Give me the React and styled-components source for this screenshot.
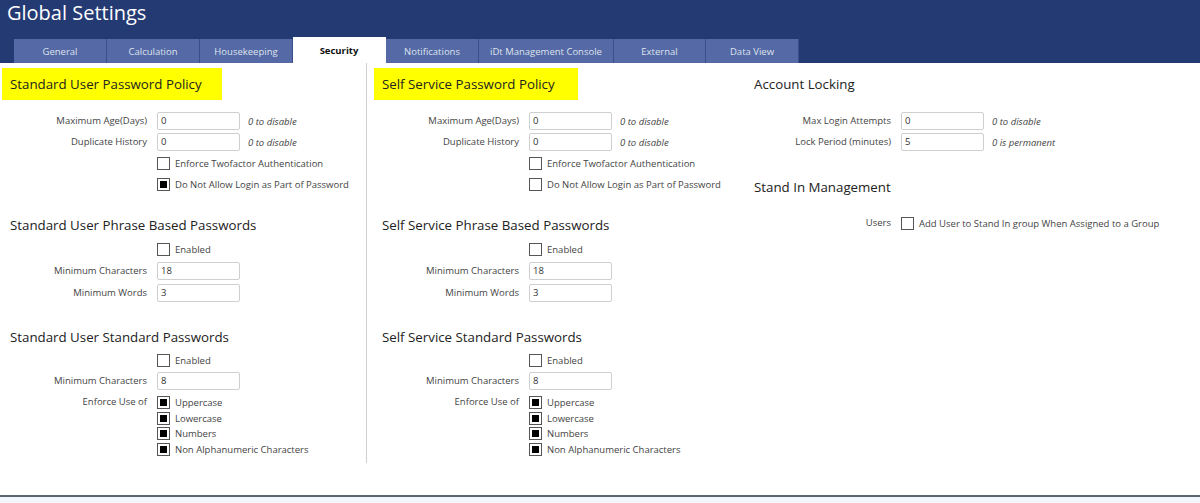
import styled, { createGlobalStyle } from 'styled-components';

const GlobalStyle = createGlobalStyle`
  body {
    margin: 0;
    background: #fff;
    font-family: "Open Sans", "Noto Sans", sans-serif;
    color: #333;
  }
`;

const Page = styled.div`
  height: 503px;
  display: flex;
  flex-direction: column;
  overflow: hidden;
`;

const Header = styled.header`
  height: 63px;
  background: #243a73;
  display: flex;
  flex-direction: column;
  justify-content: space-between;
`;

const Title = styled.h1`
  margin: 0;
  padding: 1px 0 0 7px;
  font-size: 20px;
  font-weight: 400;
  line-height: 24px;
  color: #fff;
`;

const Tabs = styled.nav`
  display: flex;
  align-items: flex-end;
  padding-left: 14px;
`;

const Tab = styled.div`
  width: ${({ $w }) => $w}px;
  height: ${({ $active }) => ($active ? 26 : 24)}px;
  box-sizing: border-box;
  display: flex;
  align-items: center;
  justify-content: center;
  font-size: 9.5px;
  font-weight: ${({ $active }) => ($active ? 700 : 400)};
  color: ${({ $active }) => ($active ? '#111' : '#dfe3ee')};
  background: ${({ $active }) => ($active ? '#fff' : '#5469a5')};
  border-right: 1px solid ${({ $active }) => ($active ? '#fff' : '#3b4e8b')};
`;

const Main = styled.main`
  flex: 1;
  display: grid;
  grid-template-columns: 367px 379px 1fr;
  align-items: start;
`;

const Column = styled.section`
  padding: 5px 0 6px ${({ $pad }) => $pad}px;
  border-right: ${({ $divider }) => ($divider ? '1px solid #d0d0d0' : 'none')};
`;

const Heading = styled.h2`
  margin: ${({ $top }) => $top || 0}px 0 0;
  display: inline-block;
  height: ${({ $tall }) => ($tall ? 32 : 20)}px;
  line-height: ${({ $tall }) => ($tall ? 32 : 20)}px;
  padding: 0 ${({ $right }) => $right || 20}px 0 8px;
  font-size: 13.3px;
  font-weight: 400;
  color: #222;
  background: ${({ $highlight }) => ($highlight ? '#ffff00' : 'transparent')};
`;

const Form = styled.div`
  display: grid;
  grid-template-columns: 145px auto;
  column-gap: 10px;
  row-gap: ${({ $gap }) => $gap || 3}px;
  margin-top: ${({ $top }) => $top}px;
  align-items: start;
`;

const Label = styled.div`
  text-align: right;
  font-size: 9.5px;
  line-height: 18px;
  color: #444;
`;

const Field = styled.div`
  display: flex;
  align-items: center;
  min-height: 18px;
`;

const Input = styled.div`
  width: 83px;
  height: 18px;
  box-sizing: border-box;
  border: 1px solid #cfcfcf;
  border-radius: 2px;
  padding-left: 3px;
  font-size: 9.5px;
  line-height: 16px;
  color: #333;
`;

const Hint = styled.span`
  margin-left: 8px;
  font-size: 9.5px;
  font-style: italic;
  color: #444;
`;

const Check = styled.span`
  width: 13px;
  height: 13px;
  box-sizing: border-box;
  border: 1px solid #555;
  background: ${({ $on }) => ($on ? '#000' : '#fff')};
  box-shadow: ${({ $on }) => ($on ? 'inset 0 0 0 2px #fff' : 'none')};
  flex-shrink: 0;
`;

const CheckText = styled.span`
  margin-left: 5px;
  font-size: 9.5px;
  color: #444;
`;

const Stack = styled.div`
  display: flex;
  flex-direction: column;
`;

const StackItem = styled.div`
  display: flex;
  align-items: center;
  height: 15.3px;
  &:first-child {
    height: 18px;
  }
`;

const Footer = styled.footer`
  height: 6px;
  border-top: 2px solid #5b6670;
  background: #f3f6fa;
`;

const tabs = [
  ['General', 93],
  ['Calculation', 93],
  ['Housekeeping', 93],
  ['Security', 93],
  ['Notifications', 93],
  ['iDt Management Console', 135],
  ['External', 92],
  ['Data View', 93],
];

function InputRow({ label, value, hint }) {
  return (
    <>
      <Label>{label}</Label>
      <Field>
        <Input>{value}</Input>
        {hint && <Hint>{hint}</Hint>}
      </Field>
    </>
  );
}

function CheckRow({ label, text, on }) {
  return (
    <>
      <Label>{label}</Label>
      <Field>
        <Check $on={on} />
        <CheckText>{text}</CheckText>
      </Field>
    </>
  );
}

function PolicyColumn({ prefix, title, loginChecked, pad, divider, right }) {
  return (
    <Column $pad={pad} $divider={divider}>
      <Heading $tall $highlight $right={right}>{title}</Heading>
      <Form $top={12}>
        <InputRow label="Maximum Age(Days)" value="0" hint="0 to disable" />
        <InputRow label="Duplicate History" value="0" hint="0 to disable" />
        <CheckRow text="Enforce Twofactor Authentication" />
        <CheckRow text="Do Not Allow Login as Part of Password" on={loginChecked} />
      </Form>

      <Heading $top={22}>{prefix} Phrase Based Passwords</Heading>
      <Form $top={5} $gap={4}>
        <CheckRow text="Enabled" />
        <InputRow label="Minimum Characters" value="18" />
        <InputRow label="Minimum Words" value="3" />
      </Form>

      <Heading $top={25}>{prefix} Standard Passwords</Heading>
      <Form $top={4}>
        <CheckRow text="Enabled" />
        <InputRow label="Minimum Characters" value="8" />
        <Label>Enforce Use of</Label>
        <Stack>
          {['Uppercase', 'Lowercase', 'Numbers', 'Non Alphanumeric Characters'].map((t) => (
            <StackItem key={t}>
              <Check $on />
              <CheckText>{t}</CheckText>
            </StackItem>
          ))}
        </Stack>
      </Form>
    </Column>
  );
}

export default function App() {
  return (
    <Page>
      <GlobalStyle />
      <Header>
        <Title>Global Settings</Title>
        <Tabs>
          {tabs.map(([name, w]) => (
            <Tab key={name} $w={w} $active={name === 'Security'}>
              {name}
            </Tab>
          ))}
        </Tabs>
      </Header>
      <Main>
        <PolicyColumn
          prefix="Standard User"
          title="Standard User Password Policy"
          loginChecked
          pad={2}
          divider
          right={20}
        />
        <PolicyColumn
          prefix="Self Service"
          title="Self Service Password Policy"
          pad={7}
          right={23}
        />
        <Column $pad={0}>
          <Heading $tall>Account Locking</Heading>
          <Form $top={12}>
            <InputRow label="Max Login Attempts" value="0" hint="0 to disable" />
            <InputRow label="Lock Period (minutes)" value="5" hint="0 is permanent" />
          </Form>
          <Heading $top={26}>Stand In Management</Heading>
          <Form $top={17}>
            <CheckRow label="Users" text="Add User to Stand In group When Assigned to a Group" />
          </Form>
        </Column>
      </Main>
      <Footer />
    </Page>
  );
}
